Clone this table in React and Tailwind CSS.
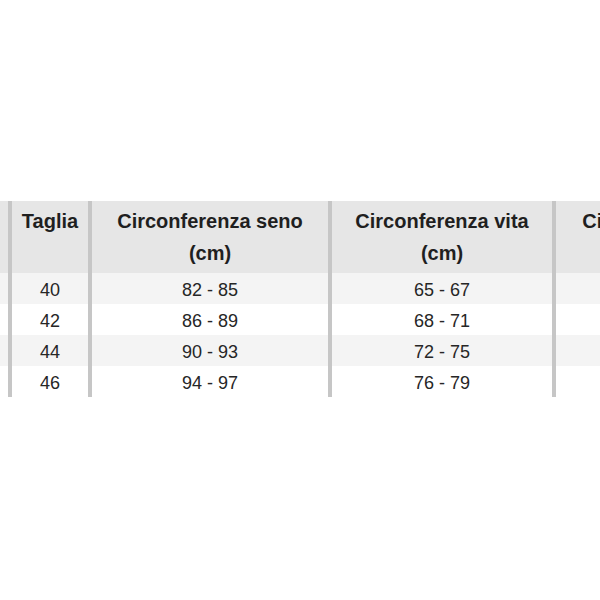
const headers = ['', 'Taglia', 'Circonferenza seno (cm)', 'Circonferenza vita (cm)', 'Circonferenza fianchi (cm)'];
const widths = ['w-[8px]', 'w-[76px]', 'w-[236px]', 'w-[220px]', 'w-[256px]'];

const rows = [
  ['', '40', '82 - 85', '65 - 67', ''],
  ['', '42', '86 - 89', '68 - 71', ''],
  ['', '44', '90 - 93', '72 - 75', ''],
  ['', '46', '94 - 97', '76 - 79', ''],
];

function Sep() {
  return <div className="w-[4px] shrink-0 bg-[#c6c6c6]" />;
}

export default function App() {
  return (
    <div
      className="w-[600px] h-[600px] overflow-hidden bg-white pt-[201px]"
      style={{ fontFamily: '"Liberation Sans", Arial, sans-serif' }}
    >
      <div className="flex flex-col w-[820px]">
        {/* Header */}
        <div className="flex h-[72px] bg-[#e6e6e6]">
          {headers.map((h, i) => (
            <div key={i} className="flex">
              {i > 0 && <Sep />}
              <div
                className={`${widths[i]} shrink-0 pt-[4px] text-center text-[20px] leading-[32px] font-bold text-[#1f1f1f] whitespace-nowrap`}
              >
                {h.includes('(cm)') ? (
                  <>
                    {h.replace(' (cm)', '')}
                    <br />
                    (cm)
                  </>
                ) : (
                  h
                )}
              </div>
            </div>
          ))}
        </div>

        {/* Body */}
        {rows.map((r, ri) => (
          <div key={ri} className={`flex h-[31px] ${ri % 2 === 0 ? 'bg-[#f4f4f4]' : 'bg-white'}`}>
            {r.map((c, i) => (
              <div key={i} className="flex">
                {i > 0 && <Sep />}
                <div
                  className={`${widths[i]} shrink-0 flex items-center justify-center pt-[3px] text-[18px] text-[#262626]`}
                >
                  {c}
                </div>
              </div>
            ))}
          </div>
        ))}
      </div>
    </div>
  );
}
